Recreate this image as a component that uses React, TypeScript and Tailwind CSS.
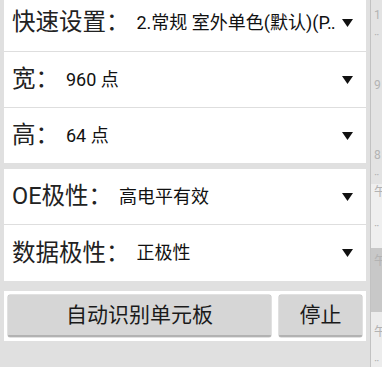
import type { ReactNode } from "react";

function Caret() {
  return (
    <svg aria-hidden="true" viewBox="0 0 11 8" className="h-[8px] w-[11px] shrink-0">
      <path d="M0 0h11L5.5 8Z" fill="#111" />
    </svg>
  );
}

type RowProps = {
  label: ReactNode;
  value: ReactNode;
  className?: string;
};

function SpinnerRow({ label, value, className = "" }: RowProps) {
  return (
    <div
      className={[
        "flex items-center pl-[8px] pr-[13px]",
        className,
      ]
        .filter(Boolean)
        .join(" ")}
    >
      <span className="shrink-0 text-[23.5px] leading-[1.3] text-[#222]">{label}</span>
      <span className="ml-[7px] min-w-0 flex-1 overflow-hidden whitespace-nowrap text-[18px] leading-[1.4] text-[#111]">
        {value}
      </span>
      <span className="ml-[3px]">
        <Caret />
      </span>
    </div>
  );
}

function Ghost({ children, className = "" }: { children: ReactNode; className?: string }) {
  return (
    <div className={["pl-[3px] text-[12px] leading-none text-[#b3b3b3]", className].join(" ")}>
      {children}
    </div>
  );
}

export default function App() {
  return (
    <div className="flex h-[367px] w-[382px] overflow-hidden bg-[#e0e0e0] font-['Roboto','Noto_Sans_CJK_SC',sans-serif]">
      <div className="flex w-[370px] flex-col px-[4px]">
        <div className="bg-white">
          <SpinnerRow
            label="快速设置："
            value="2.常规 室外单色(默认)(P‥"
            className="h-[52px] border-b border-[#dedede] pb-[6px]"
          />
          <SpinnerRow
            label="宽："
            value="960 点"
            className="h-[56px] border-b border-[#dedede]"
          />
          <SpinnerRow label="高：" value="64 点" className="h-[55px]" />
        </div>

        <div className="mt-[6px] bg-white">
          <SpinnerRow
            label="OE极性："
            value="高电平有效"
            className="h-[56px] border-b border-[#dedede]"
          />
          <SpinnerRow label="数据极性：" value="正极性" className="h-[56px]" />
        </div>

        <div className="mt-[10px] flex h-[50px] gap-[8px] bg-white p-[4px]">
          <button
            type="button"
            className="flex h-[42px] w-[263px] items-center justify-center rounded-[2px] border-b-2 border-[#b2b2b2] bg-[#d6d6d6] text-[21px] leading-none text-[#1a1a1a] shadow-[0_0_0_0.5px_#c4c4c4]"
          >
            自动识别单元板
          </button>
          <button
            type="button"
            className="flex h-[42px] flex-1 items-center justify-center rounded-[2px] border-b-2 border-[#b2b2b2] bg-[#d6d6d6] text-[21px] leading-none text-[#1a1a1a] shadow-[0_0_0_0.5px_#c4c4c4]"
          >
            停止
          </button>
        </div>
      </div>

      <div className="w-px bg-[#c2c2c2]" />

      <div className="flex w-[11px] flex-col overflow-hidden">
        <div className="flex h-[186px] flex-col bg-[#e3e3e3] pt-[9px]">
          <Ghost>1</Ghost>
          <Ghost className="mt-[8px] text-[9px] tracking-[-1px]">··</Ghost>
          <Ghost className="mt-[38px]">9</Ghost>
          <Ghost className="mt-[58px]">8</Ghost>
          <Ghost className="mt-[8px] text-[9px] tracking-[-1px]">··</Ghost>
        </div>
        <div className="flex h-[64px] flex-col bg-[#efefef] pt-[2px]">
          <Ghost>午</Ghost>
          <Ghost className="mt-[22px] text-[9px] tracking-[-1px]">··</Ghost>
        </div>
        <div className="flex h-[65px] flex-col bg-[#c8c8c8] pt-[7px]">
          <Ghost className="text-[#a8a8a8]">午</Ghost>
        </div>
        <div className="flex flex-1 flex-col bg-[#ececec] pt-[14px]">
          <Ghost>午</Ghost>
          <Ghost className="mt-[17px] text-[9px] tracking-[-1px]">··</Ghost>
        </div>
      </div>
    </div>
  );
}
